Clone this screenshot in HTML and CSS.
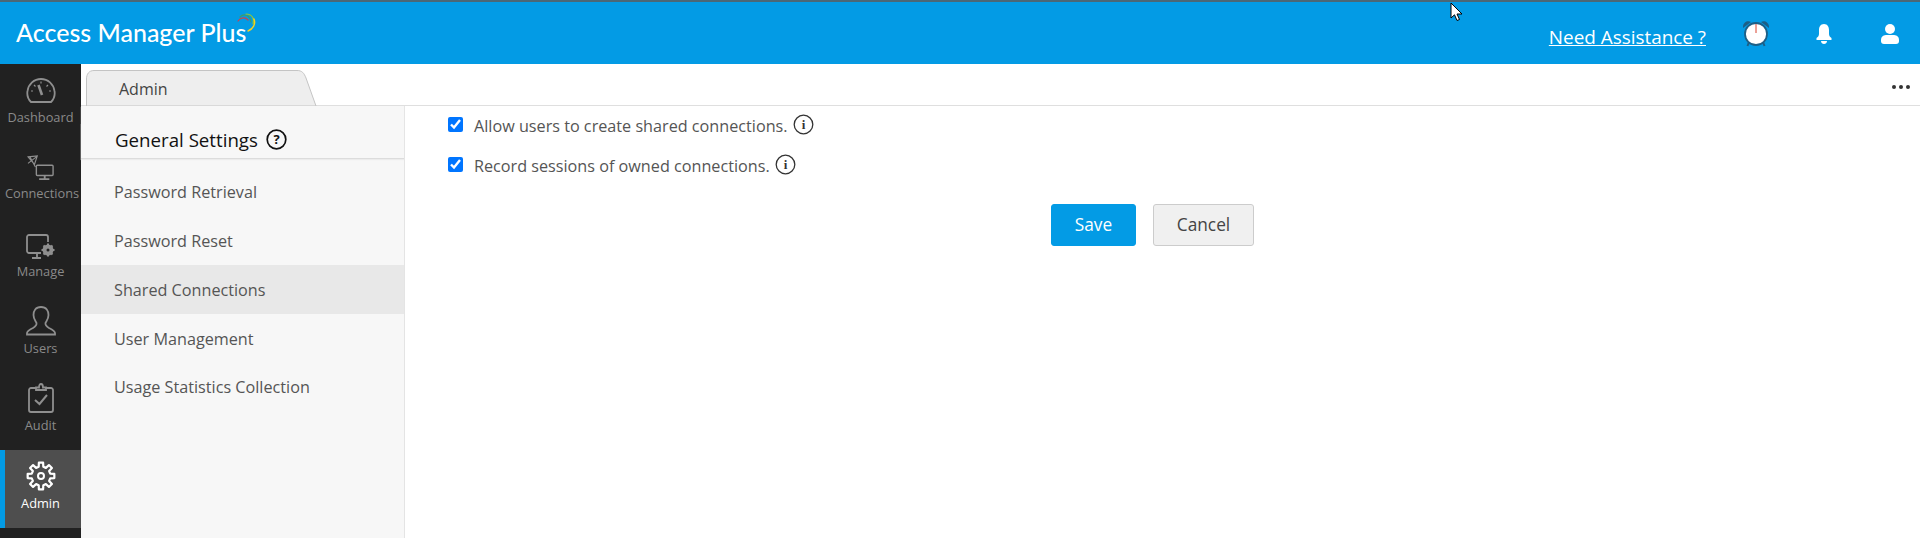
FILE: index.html
```html
<!DOCTYPE html>
<html lang="en">
<head>
<meta charset="utf-8">
<title>Access Manager Plus</title>
<link rel="stylesheet" href="styles.css">
</head>
<body>
<div class="app">
  <header class="topbar">
    <div class="logo"><span class="logo-text">Access Manager Plus</span>
      <svg class="logo-arc" width="20" height="22" viewBox="0 0 20 22" fill="none" stroke-linecap="round">
        <path d="M1 8 C4 4 8 4 11 7" stroke="#c8434f" stroke-width="1.2"/>
        <path d="M3 4 C7 0 13 2 14 9" stroke="#3f9b6a" stroke-width="1.2"/>
        <path d="M9 1 C15 1 18 6 16 11" stroke="#8cc63f" stroke-width="1.2"/>
        <path d="M17 6 C19 11 16 16 11 18" stroke="#f7d21e" stroke-width="1.4"/>
      </svg>
    </div>
    <div class="top-actions">
      <a class="help" href="#">Need Assistance ?</a>
      <svg class="alarm" width="26" height="27" viewBox="0 0 26 27">
        <path d="M0 8 C-.5 3 4 0 8 2 Z M26 8 C26.500 3 22 0 18 2 Z" fill="#1d5f86"/>
        <path d="M6 22 L4.500 26 M20 22 L21.500 26" stroke="#1d5f86" stroke-width="2"/>
        <circle cx="13" cy="14" r="11" fill="#fff" stroke="#1d5f86" stroke-width="1.800"/>
        <path d="M13 4 V13" stroke="#d9432f" stroke-width="1"/>
      </svg>
      <svg class="bell" width="16" height="20" viewBox="0 0 16 20" fill="#fff">
        <path d="M8 0 C4.500 0 3 3 3 6 V10 C3 12 1.800 13 .5 14 V16 H15.500 V14 C14.200 13 13 12 13 10 V6 C13 3 11.500 0 8 0 Z"/>
        <path d="M5 17 H11 C11 19 9.500 20 8 20 C6.500 20 5 19 5 17 Z"/>
      </svg>
      <svg class="user" width="18" height="20" viewBox="0 0 18 20" fill="#fff">
        <circle cx="9" cy="5" r="5"/>
        <path d="M0 16 C0 12 3 11 6 11 H12 C15 11 18 12 18 16 V17 C18 19 17 20 15 20 H3 C1 20 0 19 0 17 Z"/>
      </svg>
    </div>
  </header>
  <div class="body-row">
    <nav class="sidebar">
      <a class="nav-item nudge-down">
        <svg width="30" height="28" viewBox="0 0 30 28" fill="none" stroke="#8f8f8f" stroke-width="1.8">
          <path d="M5 25 C1 21 1 17 1.500 14 C2.500 7 8 2 15 2 C22 2 27.500 7 28.500 14 C29 17 29 21 25 25 Z"/>
          <path d="M12.500 8 L16 18" stroke-width="2.600"/>
          <path d="M5 14 H7 M25 14 H23 M8 8 L9.500 9.500 M22 8 L20.500 9.500 M15 4.500 V6.500" stroke-width="1.200"/>
        </svg>
        <span>Dashboard</span>
      </a>
      <a class="nav-item clipped">
        <svg width="28" height="26" viewBox="0 0 30 28" fill="none" stroke="#8f8f8f" stroke-width="1.500">
          <rect x="10" y="11" width="18" height="11" rx="1"/>
          <path d="M19 22 V25 M13 26 H24" stroke-width="2"/>
          <path d="M1 2 L11 1 L8 10 Z M3 2 L9 13 M1 9 L10 2" stroke-width="1.200"/>
        </svg>
        <span>Connections</span>
      </a>
      <a class="nav-item">
        <svg width="30" height="25" viewBox="0 0 30 25" fill="none" stroke="#8f8f8f" stroke-width="1.800">
          <path d="M15 19 H3 C2 19 1 18 1 17 V3 C1 2 2 1 3 1 H20 C21 1 22 2 22 3 V8"/>
          <path d="M11 19 V23 M6 24 H15"/>
          <circle cx="22" cy="16" r="4" stroke-width="3"/>
          <path d="M22 9.500 V22.500 M15.500 16 H28.500 M17.500 11.500 L26.500 20.500 M26.500 11.500 L17.500 20.500" stroke-width="2"/>
          <circle cx="22" cy="16" r="1.500" fill="#212121" stroke="none"/>
        </svg>
        <span>Manage</span>
      </a>
      <a class="nav-item">
        <svg width="30" height="30" viewBox="0 0 30 30" fill="none" stroke="#8f8f8f" stroke-width="1.800">
          <path d="M15 1 C9.500 1 7.500 5 7.500 9 C7.500 13 9.500 15 10.500 17 C11 19 10 20 7 22 C4 23.500 1 25 1 27 V28.500 H29 V27 C29 25 26 23.500 23 22 C20 20 19 19 19.500 17 C20.500 15 22.500 13 22.500 9 C22.500 5 20.500 1 15 1 Z"/>
        </svg>
        <span>Users</span>
      </a>
      <a class="nav-item">
        <svg width="26" height="30" viewBox="0 0 26 30" fill="none" stroke="#8f8f8f" stroke-width="1.800">
          <path d="M8 5 H3 C2 5 1 6 1 7 V27 C1 28 2 29 3 29 H23 C24 29 25 28 25 27 V7 C25 6 24 5 23 5 H18"/>
          <path d="M8 7 V4.500 H11 C11 2 12 1 13 1 C14 1 15 2 15 4.500 H18 V7 Z"/>
          <path d="M7 17 L11.500 21 L19 12" stroke-width="2"/>
        </svg>
        <span>Audit</span>
      </a>
      <a class="nav-item active">
        <svg width="30" height="30" viewBox="0 0 30 30" fill="none" stroke="#fff" stroke-width="2.200" stroke-linejoin="round">
          <path d="M12.700 5.780 L12.890 1.670 H17.110 L17.300 5.780 L19.890 6.860 L22.940 4.080 L25.920 7.060 L23.140 10.110 L24.220 12.700 L28.330 12.890 V17.110 L24.220 17.300 L23.140 19.890 L25.920 22.940 L22.940 25.920 L19.890 23.140 L17.300 24.220 L17.110 28.330 H12.890 L12.700 24.220 L10.110 23.140 L7.060 25.920 L4.080 22.940 L6.860 19.890 L5.780 17.300 L1.670 17.110 V12.890 L5.780 12.700 L6.860 10.110 L4.080 7.060 L7.060 4.080 L10.110 6.860 Z"/>
          <circle cx="15" cy="15" r="3" stroke-width="2"/>
        </svg>
        <span>Admin</span>
      </a>
    </nav>
    <div class="workspace">
      <div class="tabbar">
        <div class="tab">
          <svg class="tab-shape" width="232" height="36" viewBox="0 0 232 36">
            <path d="M.5 36 V9 C.5 4 3 .5 8 .5 H211 C216 .5 218 3 220 8 L230 36 Z" fill="#eeeeee" stroke="#c4c4c4"/>
          </svg>
          <span class="tab-label">Admin</span>
        </div>
        <div class="more"><i></i><i></i><i></i></div>
      </div>
      <div class="content-row">
        <aside class="settings">
          <h2 class="settings-title">General Settings
            <svg width="21" height="21" viewBox="0 0 21 21"><circle cx="10.500" cy="10.500" r="9.300" fill="none" stroke="#111" stroke-width="1.700"/><text x="10.500" y="15" text-anchor="middle" class="help-mark">?</text></svg>
          </h2>
          <ul class="menu">
            <li>Password Retrieval</li>
            <li>Password Reset</li>
            <li class="selected">Shared Connections</li>
            <li>User Management</li>
            <li class="last">Usage Statistics Collection</li>
          </ul>
        </aside>
        <main class="form">
          <label class="check-row"><input type="checkbox" checked><span>Allow users to create shared connections.</span>
            <svg class="info" width="21" height="21" viewBox="0 0 21 21"><circle cx="10.500" cy="10.500" r="9.300" fill="none" stroke="#333" stroke-width="1.300"/><text x="10.500" y="15" text-anchor="middle" class="info-mark">i</text></svg>
          </label>
          <label class="check-row"><input type="checkbox" checked><span>Record sessions of owned connections.</span>
            <svg class="info" width="21" height="21" viewBox="0 0 21 21"><circle cx="10.500" cy="10.500" r="9.300" fill="none" stroke="#333" stroke-width="1.300"/><text x="10.500" y="15" text-anchor="middle" class="info-mark">i</text></svg>
          </label>
          <div class="actions">
            <button class="btn primary" type="button">Save</button>
            <button class="btn" type="button">Cancel</button>
          </div>
        </main>
      </div>
    </div>
  </div>
  <svg class="cursor" width="14" height="20" viewBox="0 0 14 20">
    <path d="M1 1 V16 L4.500 12.800 L7 18.500 L9.500 17.500 L7 12 H12 Z" fill="#fff" stroke="#000" stroke-width="1"/>
  </svg>
</div>
</body>
</html>
```

FILE: styles.css
```css
* { box-sizing: border-box; }
html, body { margin: 0; height: 100%; overflow: hidden; background: #fff; }
body { font-family: "Open Sans", "Liberation Sans", sans-serif; color: #444; }
.app { position: relative; display: flex; flex-direction: column; height: 538px; }

.topbar {
  flex: 0 0 64px;
  display: flex;
  align-items: center;
  justify-content: space-between;
  background: #039be5;
  border-top: 2px solid #4b6776;
  padding: 0 21px 0 16px;
}
.logo { display: flex; align-items: flex-start; position: relative; top: -1px; }
.logo-text { font-family: Lato, "Open Sans", sans-serif; font-size: 25px; font-weight: 500; color: #fff; line-height: 30px; }
.logo-arc { margin: -4px 0 0 -9px; }
.top-actions { display: flex; align-items: center; padding-top: 1px; }
.help { font-size: 18.9px; color: #fff; text-decoration: underline; margin-right: 37px; position: relative; top: 3px; }
.alarm { margin-right: 47px; }
.bell { margin-right: 49px; }

.body-row { flex: 1; display: flex; min-height: 0; }
.sidebar { flex: 0 0 81px; background: #212121; display: flex; flex-direction: column; }
.nav-item {
  flex: 0 0 77.2px;
  display: flex;
  flex-direction: column;
  align-items: center;
  justify-content: flex-end;
  gap: 3px;
  padding-bottom: 16px;
  color: #8a8a8a;
  font-size: 12.8px;
  line-height: 18px;
  white-space: nowrap;
}
.nav-item.nudge-down { padding-bottom: 15px; }
.nav-item.clipped span { margin-left: 3px; }
.nav-item.active { background: #4e4e4e; border-left: 5px solid #039be5; color: #fff; padding-right: 5px; flex-basis: 78px; }

.workspace { flex: 1; display: flex; flex-direction: column; min-width: 0; }
.tabbar {
  flex: 0 0 42px;
  display: flex;
  justify-content: space-between;
  align-items: flex-end;
  border-bottom: 1px solid #dfdfdf;
  padding-left: 5px;
}
.tab { position: relative; width: 232px; height: 36px; margin-bottom: -1px; }
.tab-shape { position: absolute; left: 0; top: 0; }
.tab-label { position: relative; display: block; padding: 6px 0 0 33px; font-size: 16px; line-height: 26px; font-weight: 500; color: #444; }
.more { display: flex; gap: 3px; align-self: center; margin: 4px 10px 0 0; }
.more i { width: 4px; height: 4px; border-radius: 50%; background: #333; }

.content-row { flex: 1; display: flex; min-height: 0; }
.settings { position: relative; flex: 0 0 324px; background: #f7f7f7; border-right: 1px solid #e4e4e4; }
.settings::before { content: ""; position: absolute; left: -1px; top: 18px; width: 1px; height: 36px; background: #5e5e5e; }
.settings-title {
  display: flex;
  align-items: center;
  gap: 8px;
  margin: 0;
  height: 53px;
  padding: 14px 0 0 34px;
  font-size: 18.7px;
  font-weight: 400;
  color: #111;
  border-bottom: 1px solid #dcdcdc;
  box-shadow: 0 1px 1px #ececec;
}
.help-mark { font: 700 13px "Open Sans", sans-serif; fill: #111; }
.menu { list-style: none; margin: 8px 0 0; padding: 0; }
.menu li { height: 49px; line-height: 51px; padding-left: 33px; font-size: 16.2px; color: #555; }
.menu li.selected { background: #e8e8e8; }
.menu li.last { line-height: 48px; }

.form { flex: 1; padding: 0 0 0 44px; min-width: 0; }
.check-row { display: flex; align-items: center; height: 40px; font-size: 16.2px; color: #555; }
.check-row input { width: 15px; height: 15px; margin: -3px 11px 0 -1px; accent-color: #0075ff; }
.check-row span { display: block; }
.info { margin: -3px 0 0 5px; }
.info-mark { font: 700 13px "Liberation Serif", serif; fill: #333; }
.actions { display: flex; gap: 17px; margin: 18px 0 0 602px; }
.btn {
  height: 42px;
  min-width: 101px;
  padding: 0 16px 2px;
  font: 400 17.300px "Open Sans", sans-serif;
  color: #444;
  background: #f0f0f0;
  border: 1px solid #ccc;
  border-radius: 3px;
}
.btn.primary { min-width: 85px; background: #039be5; border-color: #039be5; color: #fff; }

.cursor { position: absolute; left: 1450px; top: 2px; }
```
